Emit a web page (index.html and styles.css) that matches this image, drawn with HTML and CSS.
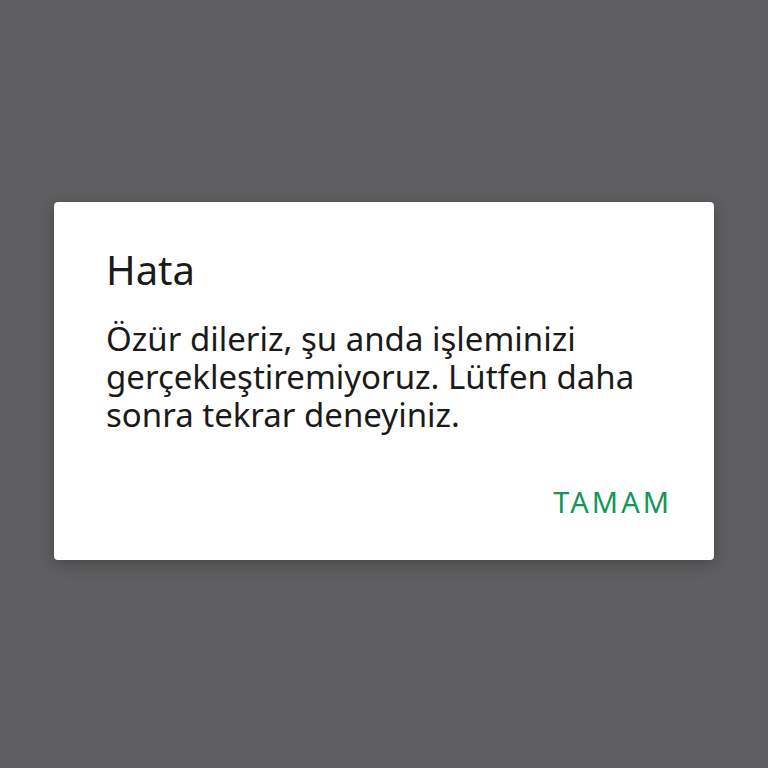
FILE: index.html
```html
<!DOCTYPE html>
<html>
<head>
  <title>Hata</title>
  <link rel="stylesheet" href="styles.css">
</head>
<body>
  <div class="dialog">
    <h2 class="title">Hata</h2>
    <p class="message">Özür dileriz, şu anda işleminizi gerçekleştiremiyoruz. Lütfen daha sonra tekrar deneyiniz.</p>
    <div class="actions">
      <button class="ok-btn">TAMAM</button>
    </div>
  </div>
</body>
</html>
```

FILE: styles.css
```css
html, body {
  height: 100%;
}
body {
  margin: 0;
  background-color: #5f5f61;
  font-family: "Noto Sans", Roboto, sans-serif;
  display: flex;
  align-items: center;
  justify-content: center;
}
.dialog {
  width: 660px;
  box-sizing: border-box;
  margin-bottom: 6px;
  background: #ffffff;
  border-radius: 4px;
  padding: 44px 42px 40px 52px;
  box-shadow: 0 4px 16px rgba(0, 0, 0, 0.25);
}
.title {
  margin: 0;
  font-size: 40px;
  font-weight: 400;
  line-height: 48px;
  color: #1a1a1a;
}
.message {
  margin: 26px 0 0;
  font-size: 33px;
  line-height: 38px;
  color: #1a1a1a;
}
.actions {
  display: flex;
  justify-content: flex-end;
  margin-top: 50px;
}
.ok-btn {
  padding: 0;
  background: none;
  border: none;
  font-family: inherit;
  font-size: 29px;
  line-height: 36px;
  letter-spacing: 3px;
  color: #16955a;
  cursor: pointer;
}
```
